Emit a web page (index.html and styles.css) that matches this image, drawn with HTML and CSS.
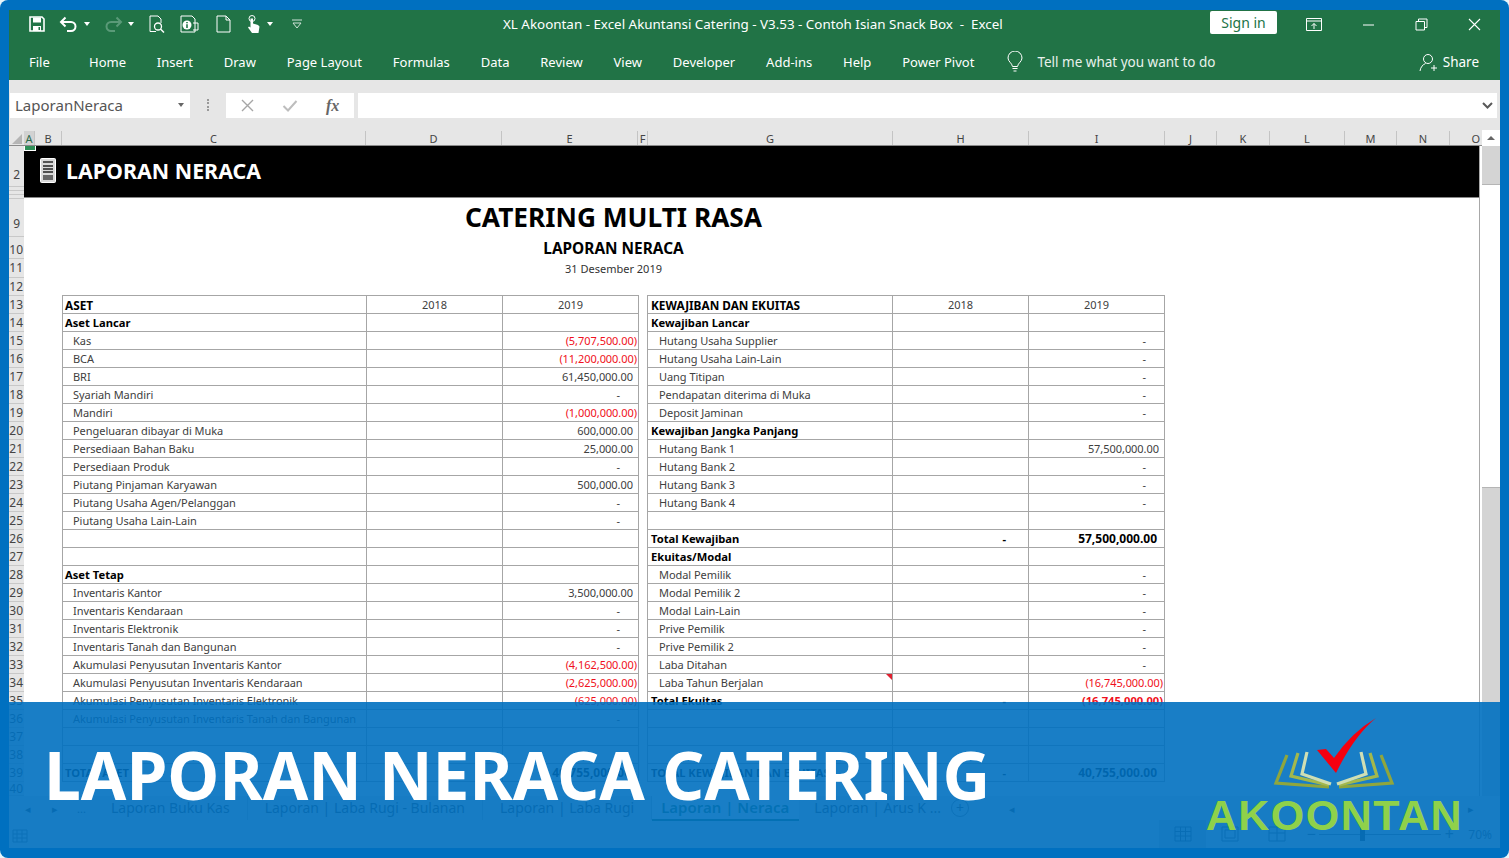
FILE: index.html

```html
<!DOCTYPE html>
<html lang="id">
<head>
  <meta charset="UTF-8">
  <title>Laporan Neraca Catering</title>
  <link rel="stylesheet" href="styles.css">
</head>
<body>
  <div class="window">
    <div class="titlebar">
      <div class="qat">
        <svg class="q-save" width="16" height="16" viewBox="0 0 16 16"><path d="M1 1h12l2 2v12H1z" fill="none" stroke="#fff" stroke-width="1.6"/><path d="M4 1.500h8v5H4z" fill="#fff"/><path d="M4 10h8v5H4z" fill="#fff"/><path d="M9.500 11h1.500v3H9.500z" fill="#217346"/></svg>
        <svg class="q-undo" width="20" height="16" viewBox="0 0 20 16"><path d="M2 6h10a4.500 4.500 0 0 1 0 9H8M6.500 1.500 2 6l4.500 4.500" fill="none" stroke="#fff" stroke-width="2"/></svg>
        <span class="caret q-c1"></span>
        <svg class="q-redo" width="20" height="16" viewBox="0 0 20 16"><path d="M18 6H8a4.500 4.500 0 0 0 0 9h4M13.500 1.500 18 6l-4.500 4.500" fill="none" stroke="#5a9a78" stroke-width="2"/></svg>
        <span class="caret q-c2"></span>
        <svg class="q-prev" width="18" height="18" viewBox="0 0 18 18"><path d="M2 16.500V1h8l3 3v4M2 16.500h6" fill="none" stroke="#fff"/><circle cx="10" cy="11.500" r="3.500" fill="none" stroke="#fff" stroke-width="1.300"/><path d="m12.500 14 3.500 3.500" stroke="#fff" stroke-width="1.500"/></svg>
        <svg class="q-info" width="20" height="18" viewBox="0 0 20 18"><path d="M1 17V1h11l3 3v13z" fill="none" stroke="#fff"/><circle cx="7" cy="10" r="4.500" fill="#fff"/><path d="M6.200 7h1.600v1.300H6.200zM6.200 9.200h1.600V13H6.200z" fill="#217346"/><path d="M13 8h5v7h-5" fill="none" stroke="#fff"/></svg>
        <svg class="q-new" width="15" height="18" viewBox="0 0 15 18"><path d="M1 1h9l4 4v12H1zM10 1v4h4" fill="none" stroke="#fff"/></svg>
        <svg class="q-touch" width="15" height="19" viewBox="0 0 15 19"><circle cx="6" cy="3.500" r="3" fill="none" stroke="#fff"/><path d="M4.500 3.500h2.500v5l5 1.500 1.500 1.500-1 6.500H6L2 12.500l1-1 1.500 1z" fill="#fff"/></svg>
        <span class="caret q-c3"></span>
        <svg class="q-more" width="12" height="10" viewBox="0 0 12 10"><path d="M1 1h10M2 4h8l-4 5z" fill="none" stroke="#cfe3d7"/></svg>
      </div>
      <div class="doc-title">XL Akoontan - Excel Akuntansi Catering - V3.53 - Contoh Isian Snack Box&nbsp; -&nbsp; Excel</div>
      <button class="sign-in">Sign in</button>
      <div class="win-controls">
        <svg width="16" height="13" viewBox="0 0 16 13"><path d="M.5.500h15v12H.5zM.5 3h15" fill="none" stroke="#fff"/><path d="M8 11V5.500M5.500 8 8 5.500 10.500 8" fill="none" stroke="#fff"/></svg>
        <svg width="13" height="13" viewBox="0 0 13 13"><path d="M1 7h11" stroke="#fff"/></svg>
        <svg width="13" height="13" viewBox="0 0 13 13"><path d="M1 3.500h8.500V12H1zM3.500 3.500V1H12v8.500H9.500" fill="none" stroke="#fff"/></svg>
        <svg width="13" height="13" viewBox="0 0 13 13"><path d="m1 1 11 11M12 1 1 12" stroke="#fff" stroke-width="1.100"/></svg>
      </div>
    </div>

    <div class="ribbon">
      <span class="menu-file">File</span>
      <nav class="menu">
        <span>Home</span>
        <span>Insert</span>
        <span>Draw</span>
        <span>Page Layout</span>
        <span>Formulas</span>
        <span>Data</span>
        <span>Review</span>
        <span>View</span>
        <span>Developer</span>
        <span>Add-ins</span>
        <span>Help</span>
        <span>Power Pivot</span>
      </nav>
      <svg class="bulb" width="16" height="22" viewBox="0 0 16 22"><path d="M5.500 15.500C5 12 1 10.500 1 7a7 7 0 0 1 14 0c0 3.500-4 5-4.500 8.500z" fill="none" stroke="#fff"/><path d="M5.500 17.500h5M6.500 20h3" stroke="#fff" stroke-width="1.200"/></svg>
      <span class="tell-me">Tell me what you want to do</span>
      <svg class="share-icon" width="18" height="19" viewBox="0 0 18 19"><circle cx="9" cy="6" r="4.500" fill="none" stroke="#fff"/><path d="M1 18c.5-4 3-6.500 5.500-7.500M12 15h6M15 12v6" fill="none" stroke="#fff"/></svg>
      <span class="share">Share</span>
    </div>

    <div class="formula-bar">
      <div class="name-box">LaporanNeraca<span class="caret dark"></span></div>
      <div class="grip"></div>
      <div class="fx-box">
        <svg width="13" height="13" viewBox="0 0 13 13"><path d="m1 1 11 11M12 1 1 12" stroke="#a6a6a6" stroke-width="1.400"/></svg>
        <svg width="16" height="13" viewBox="0 0 16 13"><path d="m1.500 7 4.500 4.500L14.500 2" fill="none" stroke="#bdbdbd" stroke-width="2"/></svg>
        <i class="fx">fx</i>
      </div>
      <div class="formula-input"><svg width="11" height="7" viewBox="0 0 11 7"><path d="m1 1 4.500 4.500L10 1" fill="none" stroke="#595959" stroke-width="2"/></svg></div>
    </div>

    <div class="columns">
      <div class="corner"><span class="corner-mark"></span></div>
      <div class="col-active">A</div><div>B</div><div>C</div><div>D</div><div>E</div><div>F</div><div>G</div><div>H</div><div>I</div><div>J</div><div>K</div><div>L</div><div>M</div><div>N</div><div class="col-last">O</div>
      <div class="scroll-up"><span></span></div>
    </div>

    <div class="sheet-area">
      <div class="rows">
        <div class="r-2">2</div><div class="r-thin"></div><div class="r-thin"></div><div class="r-thin"></div>
        <div class="r-9">9</div><div class="r-10">10</div><div class="r-11">11</div>
        <div>12</div><div>13</div><div>14</div><div>15</div><div>16</div><div>17</div><div>18</div><div>19</div><div>20</div>
        <div>21</div><div>22</div><div>23</div><div>24</div><div>25</div><div>26</div><div>27</div><div>28</div><div>29</div><div>30</div>
        <div>31</div><div>32</div><div>33</div><div>34</div><div>35</div><div>36</div><div>37</div><div>38</div><div>39</div><div class="r-40">40</div>
      </div>

      <div class="sheet">
        <span class="sel-handle"></span>
        <div class="band">
          <svg width="16" height="25" viewBox="0 0 16 25"><rect x=".5" y=".5" width="15" height="24" rx="1" fill="#d9d9d9" stroke="#fff"/><path d="M3 3h10v2H3z" fill="#555"/><path d="M3 8h10M3 11h10M3 14h10" stroke="#222" stroke-width="1.500"/><path d="M3 17h10v5H3z" fill="#666"/></svg>
          <span class="band-title">LAPORAN NERACA</span>
        </div>
        <div class="report-head">
          <div class="company">CATERING MULTI RASA</div>
          <div class="report-name">LAPORAN NERACA</div>
          <div class="report-date">31 Desember 2019</div>
        </div>

        <div class="statements">
          <table class="sheet-table assets">
            <colgroup><col class="c-label"><col class="c-year"><col class="c-year"></colgroup>
            <tr class="b head"><td class="t">ASET</td><td class="yr">2018</td><td class="yr">2019</td></tr>
            <tr class="b"><td class="t">Aset Lancar</td><td></td><td></td></tr>
            <tr><td class="i">Kas</td><td></td><td class="neg">(5,707,500.00)</td></tr>
            <tr><td class="i">BCA</td><td></td><td class="neg">(11,200,000.00)</td></tr>
            <tr><td class="i">BRI</td><td></td><td class="num">61,450,000.00</td></tr>
            <tr><td class="i">Syariah Mandiri</td><td></td><td class="dash">-</td></tr>
            <tr><td class="i">Mandiri</td><td></td><td class="neg">(1,000,000.00)</td></tr>
            <tr><td class="i">Pengeluaran dibayar di Muka</td><td></td><td class="num">600,000.00</td></tr>
            <tr><td class="i">Persediaan Bahan Baku</td><td></td><td class="num">25,000.00</td></tr>
            <tr><td class="i">Persediaan Produk</td><td></td><td class="dash">-</td></tr>
            <tr><td class="i">Piutang Pinjaman Karyawan</td><td></td><td class="num">500,000.00</td></tr>
            <tr><td class="i">Piutang Usaha Agen/Pelanggan</td><td></td><td class="dash">-</td></tr>
            <tr><td class="i">Piutang Usaha Lain-Lain</td><td></td><td class="dash">-</td></tr>
            <tr><td></td><td></td><td></td></tr>
            <tr><td></td><td></td><td></td></tr>
            <tr class="b"><td class="t">Aset Tetap</td><td></td><td></td></tr>
            <tr><td class="i">Inventaris Kantor</td><td></td><td class="num">3,500,000.00</td></tr>
            <tr><td class="i">Inventaris Kendaraan</td><td></td><td class="dash">-</td></tr>
            <tr><td class="i">Inventaris Elektronik</td><td></td><td class="dash">-</td></tr>
            <tr><td class="i">Inventaris Tanah dan Bangunan</td><td></td><td class="dash">-</td></tr>
            <tr><td class="i">Akumulasi Penyusutan Inventaris Kantor</td><td></td><td class="neg">(4,162,500.00)</td></tr>
            <tr><td class="i">Akumulasi Penyusutan Inventaris Kendaraan</td><td></td><td class="neg">(2,625,000.00)</td></tr>
            <tr><td class="i">Akumulasi Penyusutan Inventaris Elektronik</td><td></td><td class="neg">(625,000.00)</td></tr>
            <tr><td class="i">Akumulasi Penyusutan Inventaris Tanah dan Bangunan</td><td></td><td class="dash">-</td></tr>
            <tr><td></td><td></td><td></td></tr>
            <tr><td></td><td></td><td></td></tr>
            <tr class="b"><td class="t">TOTAL ASET</td><td class="dash-b">-</td><td class="num-b">40,755,000.00</td></tr>
          </table>

          <table class="sheet-table liabilities">
            <colgroup><col class="c-label-r"><col class="c-year"><col class="c-year"></colgroup>
            <tr class="b head"><td class="t">KEWAJIBAN DAN EKUITAS</td><td class="yr">2018</td><td class="yr">2019</td></tr>
            <tr class="b"><td class="t">Kewajiban Lancar</td><td></td><td></td></tr>
            <tr><td class="i">Hutang Usaha Supplier</td><td></td><td class="dash">-</td></tr>
            <tr><td class="i">Hutang Usaha Lain-Lain</td><td></td><td class="dash">-</td></tr>
            <tr><td class="i">Uang Titipan</td><td></td><td class="dash">-</td></tr>
            <tr><td class="i">Pendapatan diterima di Muka</td><td></td><td class="dash">-</td></tr>
            <tr><td class="i">Deposit Jaminan</td><td></td><td class="dash">-</td></tr>
            <tr class="b"><td class="t">Kewajiban Jangka Panjang</td><td></td><td></td></tr>
            <tr><td class="i">Hutang Bank 1</td><td></td><td class="num">57,500,000.00</td></tr>
            <tr><td class="i">Hutang Bank 2</td><td></td><td class="dash">-</td></tr>
            <tr><td class="i">Hutang Bank 3</td><td></td><td class="dash">-</td></tr>
            <tr><td class="i">Hutang Bank 4</td><td></td><td class="dash">-</td></tr>
            <tr><td></td><td></td><td></td></tr>
            <tr class="b"><td class="t">Total Kewajiban</td><td class="dash-b">-</td><td class="num-b">57,500,000.00</td></tr>
            <tr class="b"><td class="t">Ekuitas/Modal</td><td></td><td></td></tr>
            <tr><td class="i">Modal Pemilik</td><td></td><td class="dash">-</td></tr>
            <tr><td class="i">Modal Pemilik 2</td><td></td><td class="dash">-</td></tr>
            <tr><td class="i">Modal Lain-Lain</td><td></td><td class="dash">-</td></tr>
            <tr><td class="i">Prive Pemilik</td><td></td><td class="dash">-</td></tr>
            <tr><td class="i">Prive Pemilik 2</td><td></td><td class="dash">-</td></tr>
            <tr><td class="i">Laba Ditahan</td><td></td><td class="dash">-</td></tr>
            <tr><td class="i has-note">Laba Tahun Berjalan<span class="note"></span></td><td></td><td class="neg">(16,745,000.00)</td></tr>
            <tr class="b"><td class="t">Total Ekuitas</td><td class="dash-b">-</td><td class="neg">(16,745,000.00)</td></tr>
            <tr><td></td><td></td><td></td></tr>
            <tr><td></td><td></td><td></td></tr>
            <tr><td></td><td></td><td></td></tr>
            <tr class="b"><td class="t">TOTAL KEWAJIBAN DAN EKUITAS</td><td class="dash-b">-</td><td class="num-b">40,755,000.00</td></tr>
          </table>
        </div>
      </div>

      <div class="vscroll"><div class="thumb"></div></div>
    </div>

    <div class="tabs">
      <span class="tab-nav">◂</span>
      <span class="tab-nav">▸</span>
      <span class="tab-nav">...</span>
      <span class="tab">Laporan Buku Kas</span>
      <span class="tab">Laporan | Laba Rugi - Bulanan</span>
      <span class="tab">Laporan | Laba Rugi</span>
      <span class="tab active">Laporan | Neraca</span>
      <span class="tab last">Laporan | Arus K ...</span>
      <span class="tab-add">+</span>
      <span class="tab-left">◂</span>
      <span class="tab-right">▸</span>
    </div>

    <div class="status">
      <svg class="macro" width="16" height="18" viewBox="0 0 16 18"><path d="M1 5h14v12H1zM1 9h14M1 13h14M5 5v12M10 5v12" fill="none" stroke="#6f6f6f"/></svg>
      <div class="view-btns">
        <span class="view on"><svg width="18" height="16" viewBox="0 0 18 16"><path d="M1 1h16v14H1zM1 5.500h16M1 10h16M6.500 1v14M11.500 1v14" fill="none" stroke="#555"/></svg></span>
        <span class="view"><svg width="18" height="16" viewBox="0 0 18 16"><path d="M1 1h16v14H1zM4 4h10v8H4z" fill="none" stroke="#666"/></svg></span>
        <span class="view"><svg width="18" height="16" viewBox="0 0 18 16"><path d="M1 1h16v14H1zM1 7h16M9 1v14" fill="none" stroke="#666"/></svg></span>
      </div>
      <div class="zoom">
        <span class="zoom-btn">−</span>
        <span class="slider"><span class="slider-thumb"></span></span>
        <span class="zoom-btn">+</span>
        <span class="zoom-val">70%</span>
      </div>
    </div>

    <div class="banner">
      <div class="banner-title">LAPORAN NERACA CATERING</div>
      <div class="logo">
        <svg width="253" height="74" viewBox="0 0 253 74">
          <g fill="none" stroke-width="3.200">
            <path d="M81 37 70 65l53 4" stroke="#8fa63e"/>
            <path d="M92 35 85 58l38 9" stroke="#a3b84c"/>
            <path d="M101 34 96 56l29 10" stroke="#cfdfb4"/>
          </g>
          <g fill="none" stroke-width="3.200" transform="matrix(-1 0 0 1 256 0)">
            <path d="M81 37 70 65l53 4" stroke="#8fa63e"/>
            <path d="M92 35 85 58l38 9" stroke="#a3b84c"/>
            <path d="M101 34 96 56l29 10" stroke="#cfdfb4"/>
          </g>
          <path d="M111 32 120 31 128 40Q146 14 170 0 148 18 130 55Z" fill="#f5000f"/>
        </svg>
        <div class="logo-text">AKOONTAN</div>
      </div>
    </div>
  </div>
</body>
</html>
```

FILE: styles.css

```css
* {
  box-sizing: border-box;
}
body {
  margin: 0;
  background: #e8f6fa;
  font-family: "Noto Sans", "Open Sans", sans-serif;
  color: #404040;
}
svg {
  display: block;
}

.window {
  position: relative;
  width: 1509px;
  height: 858px;
  padding: 10px 9px 10px;
  background: #0070c0;
  border-radius: 8px;
  display: flex;
  flex-direction: column;
  overflow: hidden;
}

/* title bar */
.titlebar {
  position: relative;
  height: 36px;
  background: #217346;
  color: #fff;
  display: flex;
  align-items: center;
  flex: none;
  padding-bottom: 8px;
}
.qat {
  display: flex;
  align-items: center;
  padding-left: 20px;
}
.q-undo { margin-left: 14px; }
.q-c1 { margin-left: 5px; }
.q-redo { margin-left: 13px; }
.q-c2 { margin-left: 5px; border-top-color: #5a9a78; }
.q-prev { margin-left: 14px; }
.q-info { margin-left: 14px; }
.q-new { margin-left: 16px; }
.q-touch { margin-left: 15px; }
.q-c3 { margin-left: 6px; }
.q-more { margin-left: 18px; }
.caret {
  display: inline-block;
  width: 0;
  height: 0;
  border: 3.500px solid transparent;
  border-top: 4px solid #fff;
  border-bottom: 0;
}
.caret.dark {
  border-top-color: #666;
}
.doc-title {
  position: absolute;
  left: 494px;
  font-size: 13.400px;
  white-space: nowrap;
}
.sign-in {
  margin-left: auto;
  width: 67px;
  height: 23px;
  margin-top: -3px;
  border: 0;
  border-radius: 2px;
  background: #fff;
  color: #217346;
  font: 14px/20px "Noto Sans", sans-serif;
  padding: 0;
}
.win-controls {
  display: flex;
  align-items: center;
  gap: 40px;
  width: 223px;
  padding-left: 29px;
}

/* ribbon tabs */
.ribbon {
  height: 34px;
  background: #217346;
  color: #fff;
  font-size: 13px;
  display: flex;
  align-items: center;
  flex: none;
  padding-bottom: 2px;
}
.menu-file {
  margin-left: 20px;
  width: 60px;
}
.menu {
  display: flex;
  gap: 30.850px;
}
.bulb {
  margin-left: 33px;
}
.tell-me {
  margin-left: 14px;
  font-size: 13.500px;
  color: #e8f1ec;
}
.share-icon {
  margin-left: auto;
}
.share {
  margin-left: 6px;
  margin-right: 21px;
  font-size: 13.500px;
}

/* formula bar */
.formula-bar {
  height: 46px;
  background: #e6e6e6;
  display: flex;
  align-items: flex-start;
  padding: 13px 3px 0 1px;
  flex: none;
}
.name-box {
  width: 180px;
  height: 25px;
  background: #fff;
  color: #555;
  font-size: 15px;
  display: flex;
  align-items: center;
  justify-content: space-between;
  padding: 0 6px 2px 5px;
}
.grip {
  width: 2px;
  height: 12px;
  margin: 6px 17px 0;
  border-left: 2px dotted #999;
}
.fx-box {
  width: 128px;
  height: 25px;
  background: #fff;
  display: flex;
  align-items: center;
  gap: 28px;
  padding-left: 15px;
}
.fx {
  font: italic bold 16px "Liberation Serif", serif;
  color: #666;
}
.formula-input {
  flex: 1;
  height: 25px;
  margin-left: 4px;
  background: #fff;
  display: flex;
  align-items: center;
  justify-content: flex-end;
  padding-right: 4px;
}

/* column headers */
.columns {
  height: 20px;
  background: #e6e6e6;
  display: grid;
  grid-template-columns: 15px 11px 27px 304px 136px 136px 10px 245px 136px 136px 52px 53px 75px 52px 53px 30px 20px;
  font-size: 11px;
  color: #444;
  border-bottom: 1px solid #8a8a8a;
  flex: none;
}
.columns > div {
  text-align: center;
  border-right: 1px solid #c4c4c4;
  margin-top: 5px;
  height: 14px;
  line-height: 15px;
}
.columns .col-active {
  background: #d2d2d2;
  color: #2c6b4a;
}
.columns .col-last {
  text-align: right;
  border-right: 0;
  padding-right: 0;
}
.columns .corner {
  border-right: 0;
  position: relative;
}
.corner-mark {
  position: absolute;
  right: 2px;
  bottom: 1px;
  border: 5px solid transparent;
  border-right-color: #b5b5b5;
  border-bottom-color: #b5b5b5;
}
.columns .scroll-up {
  margin: 4px 0 0 2px;
  height: 16px;
  background: #fff;
  border: 0;
  position: relative;
}
.scroll-up span {
  position: absolute;
  left: 5px;
  top: 6px;
  border: 4px solid transparent;
  border-bottom: 4px solid #666;
  border-top: 0;
}

/* sheet */
.sheet-area {
  height: 650px;
  display: flex;
  background: #fff;
  flex: none;
  overflow: hidden;
}
.rows {
  width: 15px;
  background: #e6e6e6;
  font-size: 12px;
  color: #444;
  flex: none;
  overflow: hidden;
}
.rows div {
  height: 18px;
  line-height: 18px;
  text-align: right;
  white-space: nowrap;
  border-bottom: 1px solid #c8c8c8;
  padding-right: 1px;
}
.rows .r-2 { height: 41px; line-height: 58px; padding-right: 4px; }
.rows .r-thin { height: 4px; line-height: 4px; }
.rows .r-9 { height: 38px; line-height: 50px; padding-right: 4px; }
.rows .r-10 { height: 22px; line-height: 25px; }
.rows .r-11 { height: 19px; }
.rows .r-40 { height: 14px; line-height: 14px; }
.sheet {
  position: relative;
  width: 1456px;
  flex: none;
  border-right: 1px solid #a8a8a8;
}
.sel-handle {
  position: absolute;
  left: 0;
  top: -2px;
  width: 12px;
  height: 7px;
  background: #2f8f57;
  border: 1px solid #fff;
}
.band {
  height: 52px;
  background: #000;
  color: #fff;
  display: flex;
  align-items: center;
  padding: 0 0 2px 16px;
  border-bottom: 1px solid #888;
}
.band-title {
  margin-left: 10px;
  margin-top: 1px;
  font-size: 21.400px;
  font-weight: 700;
  line-height: 1;
}
.report-head {
  width: 1103px;
  height: 97px;
  margin-left: 38px;
  text-align: center;
  color: #000;
}
.company {
  height: 38px;
  font-size: 26.300px;
  font-weight: 700;
  line-height: 38px;
}
.report-name {
  height: 23px;
  padding-top: 2px;
  font-size: 15.400px;
  font-weight: 700;
  line-height: 22px;
}
.report-date {
  font-size: 11px;
  line-height: 19px;
  color: #333;
}
.statements {
  display: flex;
  gap: 8px;
  padding-left: 38px;
}
.sheet-table {
  border-collapse: collapse;
  table-layout: fixed;
  font-size: 11px;
  letter-spacing: -0.05px;
  color: #404040;
}
.sheet-table.assets { width: 576px; }
.sheet-table.liabilities { width: 517px; }
.c-label { width: 304px; }
.c-label-r { width: 245px; }
.c-year { width: 136px; }
.sheet-table tr {
  height: 18px;
}
.sheet-table td {
  border: 1px solid #a6a6a6;
  padding: 0;
  white-space: nowrap;
  overflow: hidden;
  line-height: 16px;
}
.sheet-table .b {
  font-size: 11.200px;
  font-weight: 700;
  letter-spacing: 0;
  color: #000;
}
.sheet-table .head {
  font-size: 11.800px;
}
.sheet-table td.t { padding-left: 2px; }
.sheet-table td.i { padding-left: 10px; }
.liabilities td.t { padding-left: 3px; }
.liabilities td.i { padding-left: 11px; }
.sheet-table td.yr {
  text-align: center;
  font-size: 11px;
  font-weight: 400;
  color: #404040;
}
.sheet-table td.num { text-align: right; padding-right: 5px; }
.sheet-table td.num-b { text-align: right; padding-right: 7px; font-size: 12px; }
.sheet-table td.neg { text-align: right; padding-right: 1px; color: #f01020; }
.sheet-table td.dash { text-align: right; padding-right: 18px; }
.sheet-table td.dash-b { text-align: right; padding-right: 22px; }
.has-note {
  position: relative;
}
.note {
  position: absolute;
  right: 0;
  top: 0;
  border: 3px solid transparent;
  border-top-color: #e02030;
  border-right-color: #e02030;
}
.vscroll {
  flex: 1;
  margin-left: 2px;
  background: #d4d4d4;
  padding-top: 38px;
}
.thumb {
  height: 304px;
  background: #fff;
  border-top: 1px solid #b5b5b5;
  border-bottom: 1px solid #b5b5b5;
}

/* sheet tabs */
.tabs {
  height: 24px;
  background: #e6e6e6;
  display: flex;
  align-items: center;
  font-size: 14px;
  color: #444;
  position: relative;
  flex: none;
}
.tab-nav {
  width: 27px;
  text-align: center;
  font-size: 11px;
}
.tab-nav:first-child {
  margin-left: 5px;
}
.tab {
  padding: 0 17px;
  line-height: 24px;
  border-right: 1px solid #c0c0c0;
}
.tab:nth-child(4) {
  margin-left: -1px;
}
.tab.active {
  background: #fff;
  color: #217346;
  font-size: 15px;
  font-weight: 600;
  padding: 0 10px 0 9px;
  border-bottom: 2px solid #217346;
  border-right: 0;
}
.tab.last {
  margin-left: -2px;
  border-right: 0;
  padding-right: 10px;
}
.tab-add {
  width: 18px;
  height: 18px;
  border: 1px solid #777;
  border-radius: 50%;
  text-align: center;
  line-height: 15px;
}
.tab-left {
  margin-left: 40px;
  font-size: 11px;
}
.tab-right {
  margin-left: auto;
  margin-right: 26px;
  font-size: 11px;
}

/* status bar */
.status {
  flex: 1;
  background: #e6e6e6;
  display: flex;
  align-items: center;
  padding-left: 3px;
  font-size: 12px;
  color: #555;
}
.view-btns {
  display: flex;
  margin-left: auto;
}
.view {
  width: 47px;
  height: 28px;
  display: flex;
  align-items: center;
  justify-content: center;
}
.view.on {
  background: #c6c6c6;
}
.zoom {
  display: flex;
  align-items: center;
  margin-left: 4px;
  padding-right: 8px;
}
.zoom-btn {
  width: 14px;
  font-size: 16px;
  text-align: center;
}
.slider {
  position: relative;
  width: 122px;
  height: 1px;
  margin: 0 1px;
  background: #777;
}
.slider-thumb {
  position: absolute;
  left: 41px;
  top: -7px;
  width: 5px;
  height: 14px;
  background: #444;
}
.zoom-val {
  margin-left: 12px;
}

/* overlay banner */
.banner {
  position: absolute;
  left: 9px;
  right: 9px;
  top: 702px;
  bottom: 10px;
  background: rgba(0, 112, 192, 0.9);
  display: flex;
  align-items: center;
  justify-content: space-between;
  padding: 0 37px 0 35px;
}
.banner-title {
  color: #fff;
  font-size: 65.900px;
  font-weight: 700;
  line-height: 1;
  white-space: nowrap;
}
.logo {
  margin-top: 5px;
}
.logo-text {
  margin-top: 2px;
  color: #8fd14a;
  font: 700 43px/1 "Liberation Sans", Arial, sans-serif;
  letter-spacing: 1.500px;
  white-space: nowrap;
}
```
